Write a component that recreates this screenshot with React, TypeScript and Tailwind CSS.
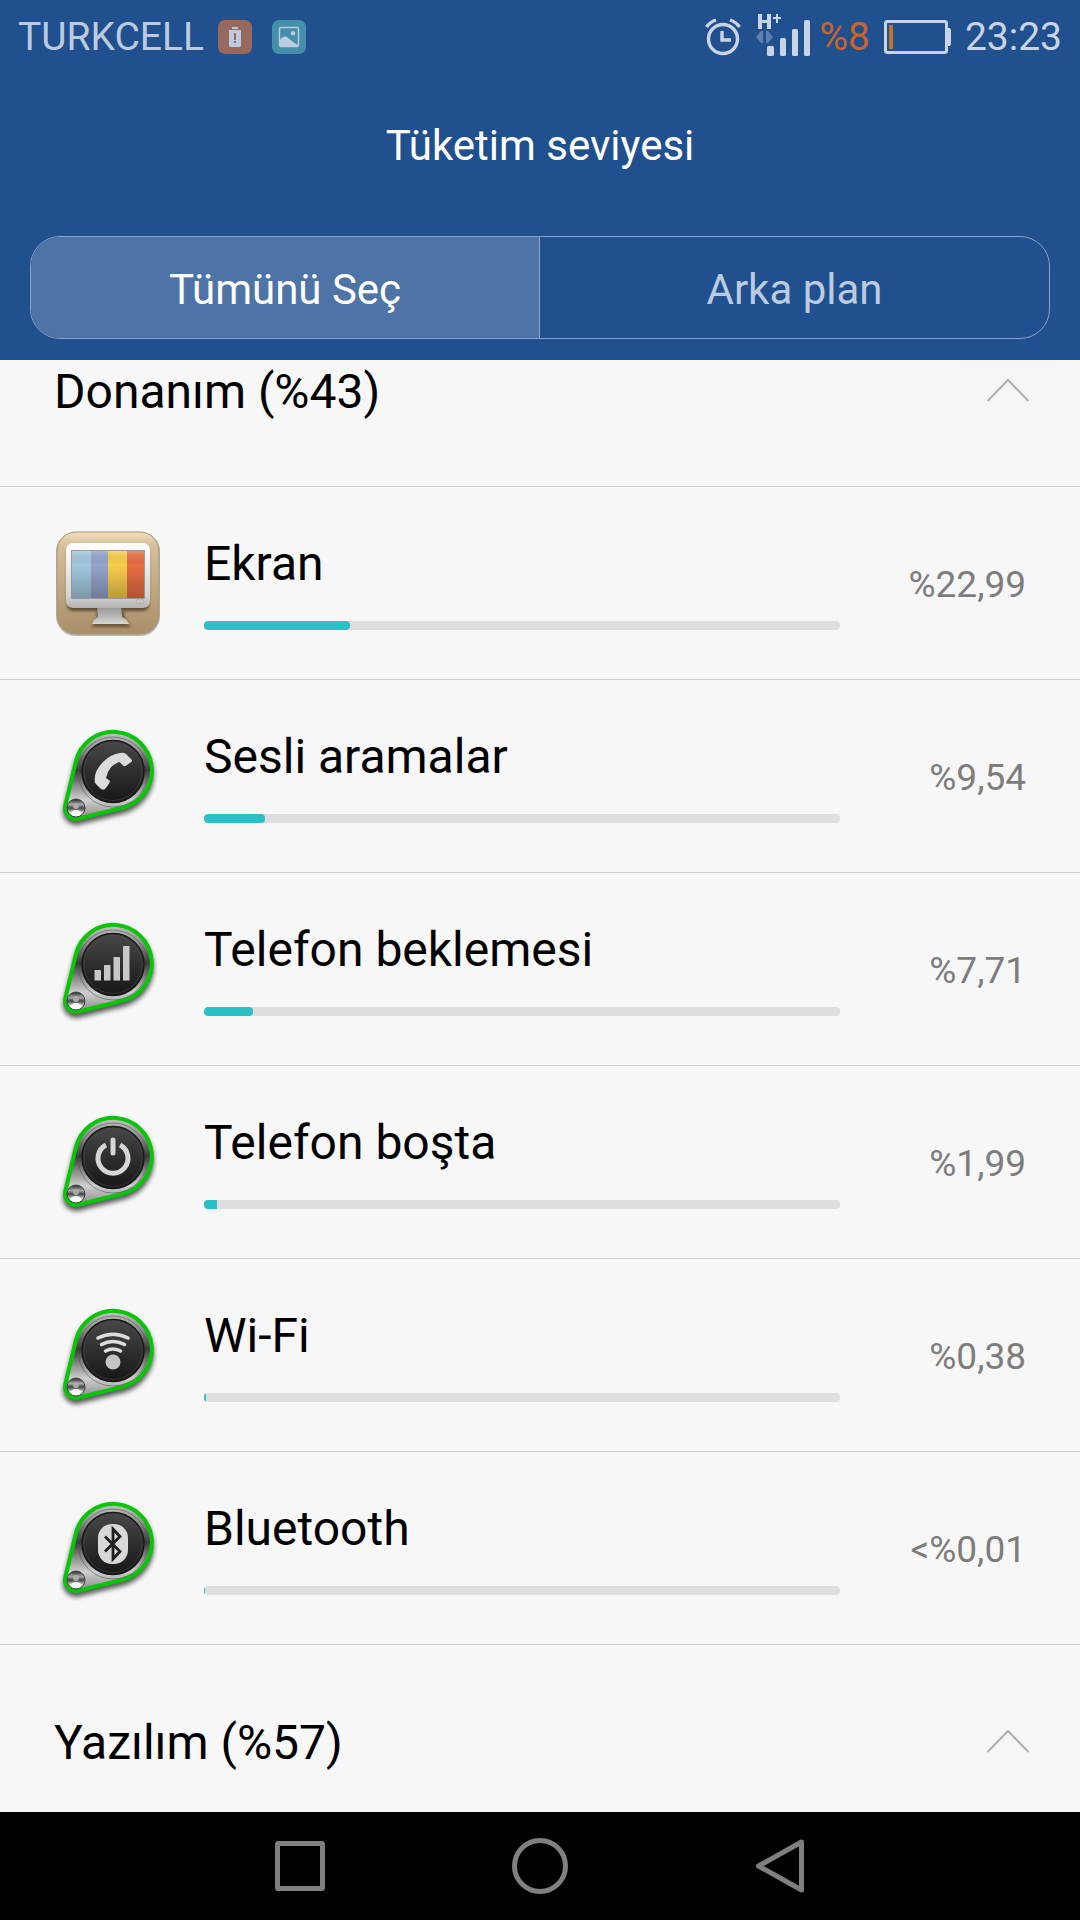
import { useId, useState } from "react";
import type { ReactNode } from "react";

interface UsageItem {
  name: string;
  percent: number;
  label: string;
  icon: ReactNode;
}

/* Round badge with the green outline, shared by most rows */
function PinIcon({ children }: { children: ReactNode }) {
  const id = useId();

  return (
    <svg viewBox="0 0 108 108" className="size-27 shrink-0" aria-hidden="true">
      <defs>
        <linearGradient id={`${id}-metal`} x1="0" y1="0" x2="0" y2="1">
          <stop offset="0" stopColor="#c4c4c4" />
          <stop offset="0.22" stopColor="#8e8e8e" />
          <stop offset="0.44" stopColor="#363636" />
          <stop offset="0.6" stopColor="#858585" />
          <stop offset="0.78" stopColor="#cfcfcf" />
          <stop offset="1" stopColor="#8a8a8a" />
        </linearGradient>
        <linearGradient id={`${id}-face`} x1="0" y1="0" x2="0" y2="1">
          <stop offset="0" stopColor="#484848" />
          <stop offset="1" stopColor="#161616" />
        </linearGradient>
        <linearGradient id={`${id}-stud`} x1="0" y1="0" x2="0" y2="1">
          <stop offset="0" stopColor="#222" />
          <stop offset="0.3" stopColor="#aaa" />
          <stop offset="0.5" stopColor="#444" />
          <stop offset="0.75" stopColor="#ccc" />
          <stop offset="1" stopColor="#fff" />
        </linearGradient>
        <filter id={`${id}-blur`} x="-20%" y="-20%" width="140%" height="140%">
          <feGaussianBlur stdDeviation="2.8" />
        </filter>
      </defs>
      <path
        d="M22 39A38.5 38.5 0 1 1 69.5 85.500L25 96.500A11 11 0 0 1 11.3 83.500Z"
        transform="translate(0 4)"
        fill="#000"
        stroke="#000"
        strokeWidth="4"
        opacity="0.65"
        filter={`url(#${id}-blur)`}
      />
      <path
        d="M22 39A38.5 38.5 0 1 1 69.5 85.5L25 96.5A11 11 0 0 1 11.3 83.5Z"
        fill={`url(#${id}-metal)`}
        stroke="#08c508"
        strokeWidth="4"
      />
      <circle cx="59" cy="50" r="35" fill="none" stroke="#555" strokeWidth="1" opacity="0.6" />
      <circle cx="59" cy="49.5" r="31" fill={`url(#${id}-face)`} stroke="#181818" strokeWidth="1.4" />
      <circle cx="59" cy="49.5" r="29" fill="none" stroke="#4a4a4a" strokeWidth="0.6" />
      <circle cx="22" cy="86" r="9" fill={`url(#${id}-stud)`} stroke="#444" strokeWidth="1" />
      <circle cx="22" cy="84" r="3" fill="#aaa" />
      <ellipse cx="22" cy="91" rx="5.5" ry="3" fill="#fff" opacity="0.85" />
      {children}
    </svg>
  );
}

function ScreenIcon() {
  return (
    <svg viewBox="0 0 108 108" className="size-27 shrink-0" aria-hidden="true">
      <defs>
        <linearGradient id="tile" x1="0" y1="0" x2="0" y2="1">
          <stop offset="0" stopColor="#f3e0bc" />
          <stop offset="0.12" stopColor="#d6c19c" />
          <stop offset="1" stopColor="#a98e68" />
        </linearGradient>
        <linearGradient id="frame" x1="0" y1="0" x2="0" y2="1">
          <stop offset="0" stopColor="#fff" />
          <stop offset="0.8" stopColor="#d4d4d4" />
          <stop offset="1" stopColor="#b4b4b4" />
        </linearGradient>
        <linearGradient id="stand" x1="0" y1="0" x2="0" y2="1">
          <stop offset="0" stopColor="#8e8e8e" />
          <stop offset="0.6" stopColor="#b8b8b8" />
          <stop offset="1" stopColor="#d6d6d6" />
        </linearGradient>
        <linearGradient id="shade" x1="0" y1="0" x2="0" y2="1">
          <stop offset="0" stopColor="#fff" stopOpacity="0.2" />
          <stop offset="0.3" stopColor="#000" stopOpacity="0" />
          <stop offset="1" stopColor="#000" stopOpacity="0.25" />
        </linearGradient>
        <filter id="soft" x="-20%" y="-20%" width="140%" height="140%">
          <feGaussianBlur stdDeviation="1.5" />
        </filter>
      </defs>
      <rect x="2" y="3" width="104" height="104" rx="20" fill="#888" opacity="0.6" />
      <rect x="3" y="3" width="102" height="102" rx="19" fill="url(#tile)" stroke="#aa9576" strokeWidth="1" />
      <rect x="13" y="18" width="82" height="64" rx="6" fill="#3c2c14" opacity="0.7" filter="url(#soft)" />
      <path d="M42 82h28l1 8 6 8H37l6-8z" fill="#3c2c14" opacity="0.6" filter="url(#soft)" />
      <path d="M43 76h24l1 12q5 2 7 7H38q2-5 6-7z" fill="url(#stand)" />
      <rect x="12" y="14" width="84" height="65" rx="7" fill="url(#frame)" />
      <rect x="17" y="21" width="74" height="49" fill="#999" />
      <rect x="18" y="22" width="19" height="47" fill="#a3c9df" />
      <rect x="37" y="22" width="17" height="47" fill="#96a3cb" />
      <rect x="54" y="22" width="19" height="47" fill="#f8cd4b" />
      <rect x="73" y="22" width="17" height="47" fill="#e86f43" />
      <rect x="18" y="22" width="72" height="47" fill="url(#shade)" />
      <ellipse cx="86" cy="72.5" rx="4" ry="2.5" fill="none" stroke="#aaa" strokeWidth="0.8" />
    </svg>
  );
}

const hardware: UsageItem[] = [
  { name: "Ekran", percent: 22.99, label: "%22,99", icon: <ScreenIcon /> },
  {
    name: "Sesli aramalar",
    percent: 9.54,
    label: "%9,54",
    icon: (
      <PinIcon>
        <path
          d="M66 31Q70 30 72 32L78 38Q78.5 40 75 41.5Q71 45 69.5 44L65.5 40Q58 42 54 50L52 56L56 59Q56 61 51 67Q50 68 47 67L41 61Q39 50 49 40Q57 32 66 31Z"
          fill="#dcdcdc"
        />
      </PinIcon>
    ),
  },
  {
    name: "Telefon beklemesi",
    percent: 7.71,
    label: "%7,71",
    icon: (
      <PinIcon>
        <g fill="#c8c8c8">
          <rect x="40.5" y="55" width="6.5" height="10.5" rx="0.5" />
          <rect x="50" y="50" width="6.5" height="15.5" rx="0.5" />
          <rect x="59.5" y="42" width="6.5" height="23.5" rx="0.5" />
          <rect x="69" y="31" width="6.5" height="34.5" rx="0.5" />
        </g>
      </PinIcon>
    ),
  },
  {
    name: "Telefon boşta",
    percent: 1.99,
    label: "%1,99",
    icon: (
      <PinIcon>
        <g fill="none" stroke="#d6d6d6" strokeWidth="5">
          <path d="M52 37A15 15 0 1 0 66 37" />
          <path d="M59 32v13" strokeLinecap="round" />
        </g>
      </PinIcon>
    ),
  },
  {
    name: "Wi-Fi",
    percent: 0.38,
    label: "%0,38",
    icon: (
      <PinIcon>
        <circle cx="59" cy="61" r="7.5" fill="#c4c4c4" />
        <g fill="none" stroke="#dcdcdc" strokeWidth="3.6" strokeLinecap="round">
          <path d="M44 37Q59 29.5 74 37" />
          <path d="M47.5 43.5Q59 37.5 70.5 43.5" />
          <path d="M51.5 50Q59 46 66.5 50" />
        </g>
      </PinIcon>
    ),
  },
  {
    name: "Bluetooth",
    percent: 0.01,
    label: "<%0,01",
    icon: (
      <PinIcon>
        <rect x="44" y="30" width="30" height="40" rx="14" fill="#d8d8d8" />
        <path
          d="M51 42.5L66 57.5L59 65V35L66 42.5L51 57.5"
          fill="none"
          stroke="#202020"
          strokeWidth="2.8"
        />
      </PinIcon>
    ),
  },
];

function StatusBar() {
  return (
    <div className="flex h-[74px] items-center justify-between pr-[18px] pl-[18px] text-[39px] leading-12 text-[#bccbe0]">
      <div className="flex items-center">
        <span>TURKCELL</span>
        <svg viewBox="0 0 34 34" className="ml-[14px] size-[34px]" aria-hidden="true">
          <rect width="34" height="34" rx="7" fill="#97695f" />
          <path d="M14 7h6v2h-6zM11 10h12v16l-1 1H12l-1-1z" fill="#bccbe0" />
          <path d="M16 13h2v7h-2zM16 21h2v2h-2z" fill="#97695f" />
        </svg>
        <svg viewBox="0 0 34 34" className="ml-5 size-[34px]" aria-hidden="true">
          <rect width="34" height="34" rx="7" fill="#4490aa" />
          <rect x="7.5" y="7.5" width="19" height="19" rx="1.5" fill="none" stroke="#bccbe0" strokeWidth="1.4" />
          <circle cx="21" cy="13.3" r="2.2" fill="#bccbe0" />
          <path d="M8 20Q11 15 15 17L21 22L26 25V26H8Z" fill="#bccbe0" />
        </svg>
      </div>

      <div className="flex items-center">
        {/* Alarm */}
        <svg viewBox="0 0 36 38" className="mr-[15px] h-[38px] w-9" fill="none" stroke="#c9d4e6" aria-hidden="true">
          <circle cx="18" cy="21" r="14.5" strokeWidth="3.4" />
          <path d="M17 13v9h9" strokeWidth="3.4" />
          <path d="M1.5 9Q5 4 11 2M34.5 9Q31 4 25 2" strokeWidth="3.4" />
        </svg>
        {/* Mobile signal */}
        <svg viewBox="0 0 54 51" className="mr-[9px] mb-[11px] h-[51px] w-[54px]" fill="#c9d4e6" aria-hidden="true">
          <g transform="translate(0 8)">
            <path d="M2 0h4v6h5V0h4v15h-4V9H6v6H2zM20 0h2v3h3v2h-3v4h-2V5h-3V3h3z" />
            <path d="M0 23l5-6h2v12H5zM17 23l-5-6h-2v12h2z" fill="#5d80ae" />
            <rect x="11" y="32" width="7" height="10" rx="1.5" />
            <rect x="24" y="24" width="6" height="18" rx="1.5" />
            <rect x="36" y="15" width="6" height="27" rx="1.5" />
            <rect x="48" y="6" width="6" height="36" rx="1.5" />
          </g>
        </svg>
        <span className="text-[#cb642a]">%8</span>
        {/* Battery */}
        <svg viewBox="0 0 67 34" className="mx-[14px] h-[34px] w-[67px]" aria-hidden="true">
          <rect x="1.5" y="1.5" width="61" height="31" rx="2" fill="none" stroke="#c9d4e6" strokeWidth="3" />
          <path d="M63 8h3l1 2v14l-1 2h-3z" fill="#c9d4e6" />
          <rect x="5" y="5" width="4" height="24" fill="#bd7526" />
        </svg>
        <span className="text-[#c9d4e6]">23:23</span>
      </div>
    </div>
  );
}

function GroupHeader({ title }: { title: string }) {
  return (
    <div className="flex h-48 shrink-0 items-center justify-between pr-6 pl-[54px]">
      <h2 className="pt-1 text-[48px] leading-14">{title}</h2>
      <button type="button" aria-label={title} className="flex size-24 items-center justify-center bg-[#f6f6f6]">
        <svg viewBox="0 0 44 24" className="h-6 w-11" fill="none" stroke="#b0b0b0" strokeWidth="2" aria-hidden="true">
          <path d="M1.5 23L22 2L42.5 23" />
        </svg>
      </button>
    </div>
  );
}

function UsageRow({ item }: { item: UsageItem }) {
  return (
    <li className="flex h-[193px] items-center border-b border-[#d0d0d0] px-[54px]">
      {item.icon}
      <div className="ml-[42px] flex-1">
        <h3 className="text-[48px] leading-14">{item.name}</h3>
        <div className="mt-[29px] h-[9px] overflow-hidden rounded bg-[#dedede]">
          <div
            className={item.percent > 3 ? "h-full rounded bg-[#29c0c7]" : "h-full min-w-px bg-[#29c0c7]"}
            style={{ width: `${item.percent}%` }}
          />
        </div>
      </div>
      <span className="w-[186px] pt-1 text-right text-[37px] leading-12 text-[#7d7d7d]">{item.label}</span>
    </li>
  );
}

export default function App() {
  const [tab, setTab] = useState("all");

  return (
    <div className="flex h-screen flex-col bg-[#f7f7f7] font-['Roboto',sans-serif] text-black">
      <header className="shrink-0 bg-[#20508d] pb-[21px]">
        <StatusBar />
        <h1 className="mt-12 text-center text-[42px] leading-12 text-white">Tüketim seviyesi</h1>
        <div className="mx-[30px] mt-[66px] grid h-[103px] grid-cols-2 overflow-hidden rounded-[30px] border border-[#8aa3c7] text-[42px]">
          <button
            type="button"
            onClick={() => setTab("all")}
            className={tab === "all" ? "border-r border-[#8aa3c7] bg-[#4e73a6] pt-1 text-white" : "border-r border-[#8aa3c7] pt-1 text-[#bccbe0]"}
          >
            Tümünü Seç
          </button>
          <button
            type="button"
            onClick={() => setTab("background")}
            className={tab === "background" ? "bg-[#4e73a6] pt-1 text-white" : "pt-1 text-[#bccbe0]"}
          >
            Arka plan
          </button>
        </div>
      </header>

      {/* The list is scrolled a little way under the header */}
      <main className="min-h-0 flex-1 overflow-hidden">
        <section className="-mt-[66px]">
          <GroupHeader title="Donanım (%43)" />
          <ul className="border-t border-[#d0d0d0]">
            {hardware.map((item) => (
              <UsageRow key={item.name} item={item} />
            ))}
          </ul>
        </section>
        <section>
          <GroupHeader title="Yazılım (%57)" />
        </section>
      </main>

      <nav className="grid h-27 shrink-0 grid-cols-3 bg-black px-45">
        <button type="button" aria-label="Son uygulamalar" className="flex items-center justify-center">
          <span className="size-[50px] rounded-[3px] border-5 border-[#7f7f7f]" />
        </button>
        <button type="button" aria-label="Ana ekran" className="flex items-center justify-center">
          <span className="size-14 rounded-full border-5 border-[#7f7f7f]" />
        </button>
        <button type="button" aria-label="Geri" className="flex items-center justify-center">
          <svg viewBox="0 0 48 54" className="h-[54px] w-12" fill="none" stroke="#7f7f7f" strokeWidth="5" strokeLinejoin="round" aria-hidden="true">
            <path d="M45.5 3v48L2.5 27z" />
          </svg>
        </button>
      </nav>
    </div>
  );
}
